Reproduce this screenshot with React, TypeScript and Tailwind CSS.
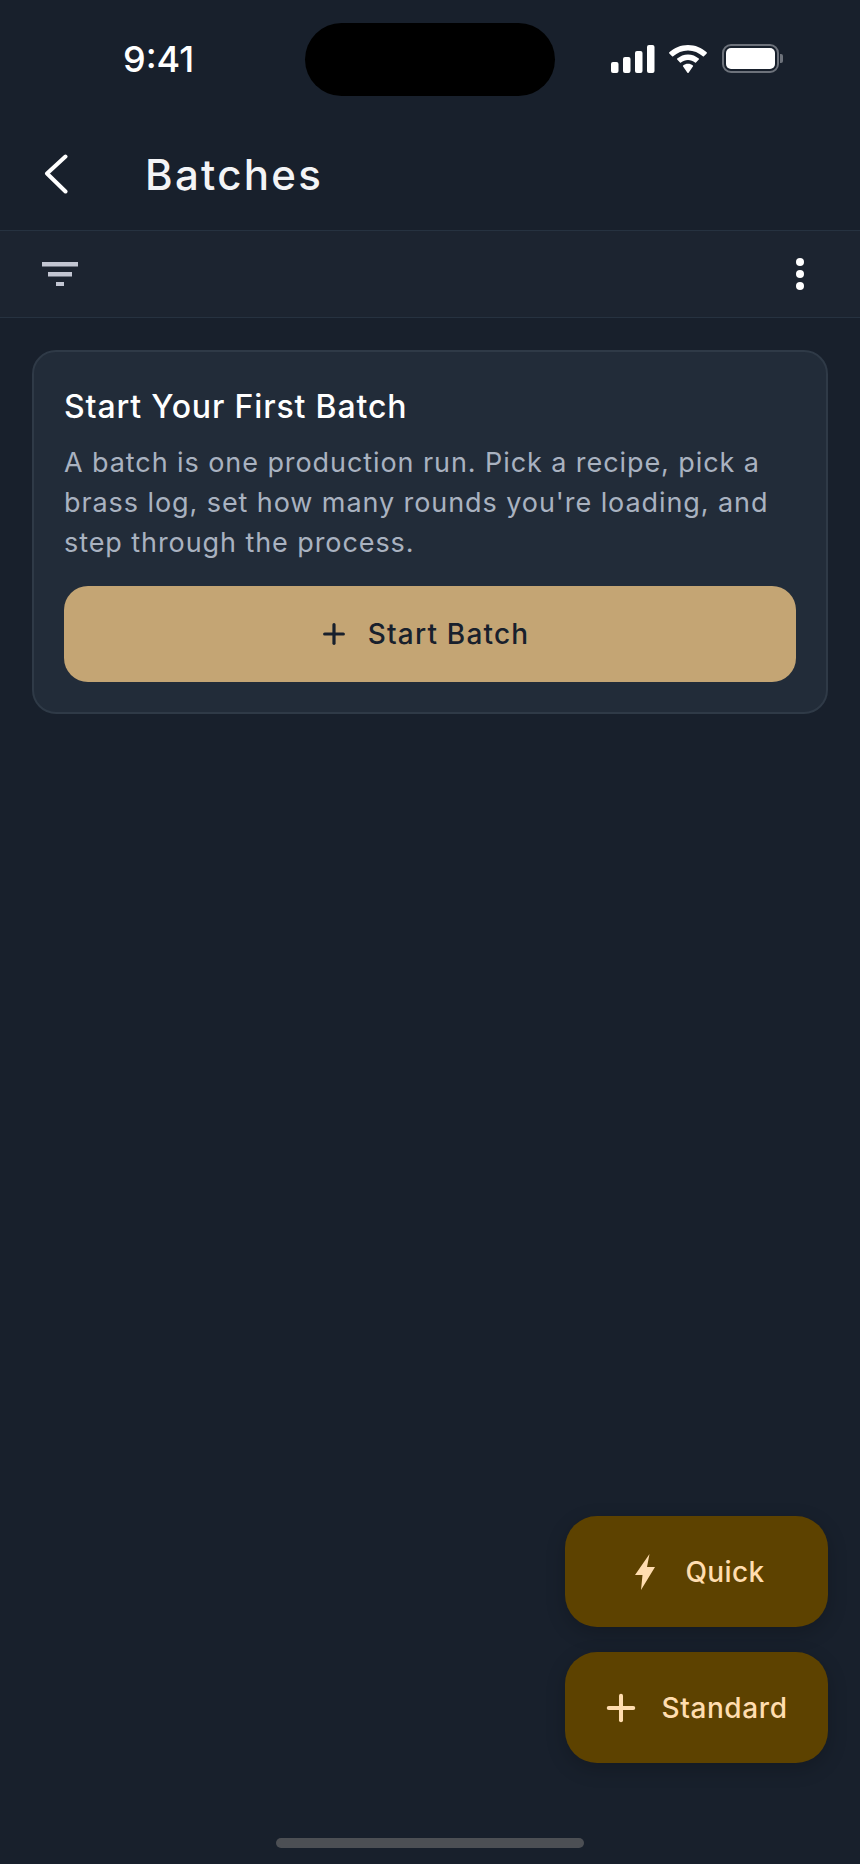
import { Plus } from "lucide-react";

function SignalBars() {
  return (
    <svg width="44" height="28" viewBox="0 0 44 28" fill="#fff">
      <rect x="0" y="17" width="7.5" height="11" rx="2" />
      <rect x="12" y="12" width="7.5" height="16" rx="2" />
      <rect x="24" y="6" width="7.5" height="22" rx="2" />
      <rect x="36" y="0" width="7.5" height="28" rx="2" />
    </svg>
  );
}

function Wifi() {
  return (
    <svg width="38" height="28" viewBox="0 0 38 28" fill="#fff">
      <path d="M19 0C11.800 0 5.400 2.800 0.300 7.300C0 7.600 0 8.100 0.300 8.400L3.100 11.300C3.400 11.600 3.900 11.600 4.200 11.300C8.200 7.700 13.300 5.400 19 5.400C24.700 5.400 29.800 7.700 33.800 11.300C34.100 11.600 34.600 11.600 34.900 11.300L37.700 8.400C38 8.100 38 7.600 37.700 7.300C32.600 2.800 26.200 0 19 0Z" />
      <path d="M19 9.400C14.900 9.400 11.200 11 8.200 13.500C7.900 13.800 7.900 14.300 8.200 14.600L11 17.500C11.300 17.800 11.700 17.800 12 17.500C14 15.900 16.400 14.900 19 14.900C21.600 14.900 24 15.900 26 17.500C26.300 17.800 26.700 17.800 27 17.500L29.800 14.600C30.100 14.300 30.100 13.800 29.800 13.500C26.800 11 23.100 9.400 19 9.400Z" />
      <path d="M19 18.800C17.100 18.800 15.500 19.400 14.100 20.500C13.800 20.800 13.800 21.200 14.100 21.500L18.400 27.700C18.700 28.100 19.300 28.100 19.600 27.700L23.900 21.500C24.200 21.200 24.200 20.800 23.900 20.500C22.500 19.400 20.900 18.800 19 18.800Z" />
    </svg>
  );
}

function Battery() {
  return (
    <div className="flex items-center gap-[1px]">
      <div className="w-[57px] h-[29px] rounded-[9px] border-[2px] border-[#6d727b] p-[2px]">
        <div className="w-full h-full rounded-[5px] bg-white" />
      </div>
      <div className="w-[3px] h-[9px] rounded-r-[2px] bg-[#6d727b]" />
    </div>
  );
}

function Bolt() {
  return (
    <svg width="20" height="36" viewBox="0 0 20 36" fill="#ffddaf">
      <path d="M14.500 0L0 21H7.500L6 36L20 13H12L14.500 0Z" />
    </svg>
  );
}

export default function App() {
  return (
    <div
      className="relative w-[860px] h-[1864px] overflow-hidden bg-[#18202c] text-white"
      style={{ fontFamily: "Inter, sans-serif" }}
    >
      {/* status bar */}
      <div className="h-[120px] pt-[23px] flex items-start">
        <div className="w-[305px] h-[73px] flex items-center pl-[123px] pb-[2px]">
          <span className="text-[36px] font-medium leading-none">9:41</span>
        </div>
        <div className="w-[250px] h-[73px] rounded-[37px] bg-black" />
        <div className="h-[73px] flex items-center gap-[14px] pl-[56px] pb-[2px]">
          <SignalBars />
          <Wifi />
          <div className="ml-[1px]">
            <Battery />
          </div>
        </div>
      </div>

      {/* app bar */}
      <div className="h-[110px] flex items-center pl-[44px] pb-[2px]">
        <svg width="24" height="40" viewBox="0 0 24 40" fill="none" stroke="#fff" strokeWidth="4" strokeLinecap="round" strokeLinejoin="round">
          <path d="M21.500 2.500L3 19.500L21.500 37.500" />
        </svg>
        <h1 className="ml-[77px] text-[42px] font-medium tracking-[2.3px] leading-none text-[#f3f4f6] translate-y-[1px]">Batches</h1>
      </div>

      {/* toolbar */}
      <div className="h-[88px] flex items-center justify-between pl-[42px] pr-[56px] bg-[#1c2430] border-y border-[#263240]">
        <svg width="36" height="24" viewBox="0 0 36 24" fill="#c2c6d2">
          <rect x="0" y="0" width="36" height="4.500" />
          <rect x="6" y="10" width="24" height="4.500" />
          <rect x="14" y="20" width="8" height="4" />
        </svg>
        <svg width="8" height="32" viewBox="0 0 8 32" fill="#fff">
          <circle cx="4" cy="4" r="4" />
          <circle cx="4" cy="16" r="4" />
          <circle cx="4" cy="28" r="4" />
        </svg>
      </div>

      {/* empty state card */}
      <div className="ml-[32px] mr-[32px] mt-[32px] h-[364px] rounded-[24px] border-[2px] border-[#2f3a47] bg-[#222c39] px-[30px] pt-[33px]">
        <h2 className="text-[32px] font-medium leading-[44px] tracking-[0.85px]">Start Your First Batch</h2>
        <p className="mt-[14px] text-[27px] leading-[40px] tracking-[0.92px] text-[#a9b2c0]">
          A batch is one production run. Pick a recipe, pick a brass log, set how many rounds you're loading, and step through the process.
        </p>
        <button className="mt-[23px] w-full h-[96px] rounded-[24px] bg-[#c4a574] flex items-center justify-center gap-[18px] pr-[13px] text-[#18202c]">
          <Plus size={32} strokeWidth={2.400} />
          <span className="text-[28px] font-medium tracking-[1.2px]">Start Batch</span>
        </button>
      </div>

      {/* fabs */}
      <div className="absolute left-[565px] top-[1516px] w-[263px] flex flex-col gap-[25px]">
        <button className="h-[111px] rounded-[32px] bg-[#5d4200] shadow-[0_6px_20px_rgba(0,0,0,0.2)] flex items-center justify-center gap-[30px] pl-[7px] text-[#ffddaf]">
          <Bolt />
          <span className="text-[28px] font-medium tracking-[0.4px]">Quick</span>
        </button>
        <button className="h-[111px] rounded-[32px] bg-[#5d4200] shadow-[0_6px_20px_rgba(0,0,0,0.2)] flex items-center justify-center gap-[19px] pr-[5px] text-[#ffddaf]">
          <Plus size={42} strokeWidth={2.300} />
          <span className="text-[28px] font-medium tracking-[0.6px]">Standard</span>
        </button>
      </div>

      {/* home indicator */}
      <div className="absolute left-[276px] top-[1838px] w-[308px] h-[10px] rounded-full bg-[#4c4f54]" />
    </div>
  );
}
